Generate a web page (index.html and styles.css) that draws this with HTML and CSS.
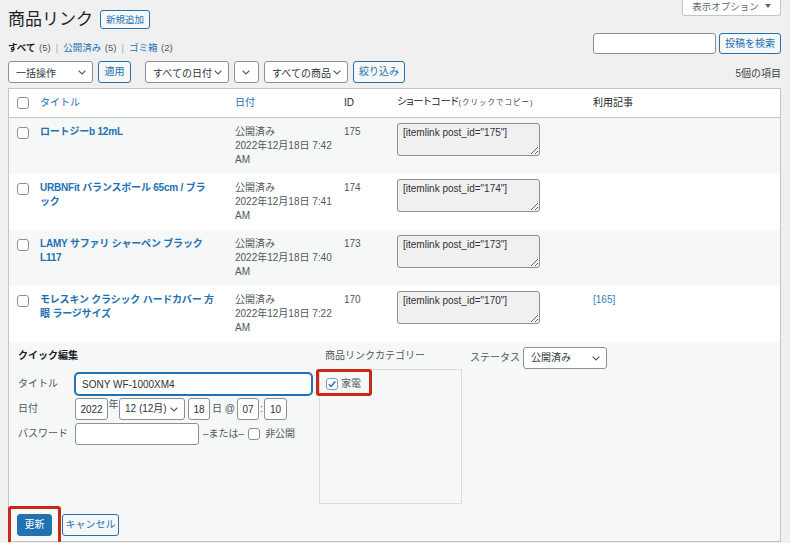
FILE: index.html
```html
<!DOCTYPE html>
<html lang="ja">
<head>
<meta charset="utf-8">
<title>商品リンク</title>
<link rel="stylesheet" href="styles.css">
</head>
<body>
<div class="wrap">
  <div class="top">
    <h1>商品リンク</h1>
    <a class="btn page-action">新規追加</a>
    <button class="screen-opts">表示オプション <svg width="6" height="4" viewBox="0 0 6 4"><path d="M0 0h6L3 4z" fill="#646970"/></svg></button>
  </div>

  <div class="bar">
    <div class="subsubsub"><b>すべて</b> <span class="count">(5)</span><span class="sep">|</span><a>公開済み</a> <span class="count">(5)</span><span class="sep">|</span><a>ゴミ箱</a> <span class="count">(2)</span></div>
    <div class="search">
      <input class="search-input" type="search">
      <button class="btn">投稿を検索</button>
    </div>
  </div>

  <div class="tablenav">
    <div class="select w85"><span>一括操作</span><svg class="chev" width="8" height="5" viewBox="0 0 8 5"><path d="M0.6 0.6L4 4 7.4 0.6" fill="none" stroke="#50575e" stroke-width="1.1"/></svg></div>
    <button class="btn w33">適用</button>
    <div class="select w84 gap-l"><span>すべての日付</span><svg class="chev" width="8" height="5" viewBox="0 0 8 5"><path d="M0.6 0.6L4 4 7.4 0.6" fill="none" stroke="#50575e" stroke-width="1.1"/></svg></div>
    <div class="select w25"><span></span><svg class="chev" width="8" height="5" viewBox="0 0 8 5"><path d="M0.6 0.6L4 4 7.4 0.6" fill="none" stroke="#50575e" stroke-width="1.1"/></svg></div>
    <div class="select w84"><span>すべての商品</span><svg class="chev" width="8" height="5" viewBox="0 0 8 5"><path d="M0.6 0.6L4 4 7.4 0.6" fill="none" stroke="#50575e" stroke-width="1.1"/></svg></div>
    <button class="btn w52">絞り込み</button>
    <span class="num">5個の項目</span>
  </div>

  <table class="list">
    <colgroup>
      <col class="c-cb"><col class="c-title"><col class="c-date"><col class="c-id"><col class="c-code"><col class="c-use">
    </colgroup>
    <thead>
      <tr>
        <th class="cb"><span class="chk"></span></th>
        <th><a class="sort">タイトル</a></th>
        <th><a class="sort">日付</a></th>
        <th>ID</th>
        <th><span class="palt">ショートコード</span><small>(クリックでコピー)</small></th>
        <th>利用記事</th>
      </tr>
    </thead>
    <tbody>
      <tr class="alt">
        <td class="cb"><span class="chk"></span></td>
        <td><a class="row-title">ロートジーb 12mL</a></td>
        <td>公開済み<br><span class="nw">2022年12月18日 7:42</span><br>AM</td>
        <td>175</td>
        <td class="code"><textarea readonly>[itemlink post_id="175"]</textarea></td>
        <td></td>
      </tr>
      <tr>
        <td class="cb"><span class="chk"></span></td>
        <td><a class="row-title">URBNFit バランスボール 65cm / ブラ<br>ック</a></td>
        <td>公開済み<br><span class="nw">2022年12月18日 7:41</span><br>AM</td>
        <td>174</td>
        <td class="code"><textarea readonly>[itemlink post_id="174"]</textarea></td>
        <td></td>
      </tr>
      <tr class="alt">
        <td class="cb"><span class="chk"></span></td>
        <td><a class="row-title">LAMY サファリ シャーペン ブラック<br>L117</a></td>
        <td>公開済み<br><span class="nw">2022年12月18日 7:40</span><br>AM</td>
        <td>173</td>
        <td class="code"><textarea readonly>[itemlink post_id="173"]</textarea></td>
        <td></td>
      </tr>
      <tr>
        <td class="cb"><span class="chk"></span></td>
        <td><a class="row-title">モレスキン クラシック ハードカバー 方<br>眼 ラージサイズ</a></td>
        <td>公開済み<br><span class="nw">2022年12月18日 7:22</span><br>AM</td>
        <td>170</td>
        <td class="code"><textarea readonly>[itemlink post_id="170"]</textarea></td>
        <td><a class="use">[165]</a></td>
      </tr>
      <tr class="qe-row">
        <td colspan="6">
          <div class="qe">
            <div class="qe-cols">
              <div class="qe-left">
                <div class="qe-head">クイック編集</div>
                <div class="qe-field first">
                  <span class="qe-label">タイトル</span>
                  <input class="in title-in" value="SONY WF-1000XM4">
                </div>
                <div class="qe-field">
                  <span class="qe-label">日付</span>
                  <input class="in w33 c" value="2022">
                  <span class="unit-year">年</span>
                  <div class="select w66"><span>12 (12月)</span><svg class="chev" width="8" height="5" viewBox="0 0 8 5"><path d="M0.6 0.6L4 4 7.4 0.6" fill="none" stroke="#50575e" stroke-width="1.1"/></svg></div>
                  <input class="in w22 c ml3" value="18">
                  <span class="unit">日 @</span>
                  <input class="in w22 c" value="07">
                  <span class="colon">:</span>
                  <input class="in w23 c" value="10">
                </div>
                <div class="qe-field">
                  <span class="qe-label">パスワード</span>
                  <input class="in w124" type="text">
                  <span class="or">–または–</span>
                  <span class="chk ml4"></span>
                  <span class="priv">非公開</span>
                </div>
              </div>
              <div class="qe-mid">
                <div class="qe-head2">商品リンクカテゴリー</div>
                <div class="cat-box">
                  <label class="cat"><span class="chk on"><svg width="10" height="10" viewBox="0 0 10 10"><path d="M1.8 5.2l2.2 2.3 4.3-5" fill="none" stroke="#2271b1" stroke-width="1.5"/></svg></span>家電</label>
                </div>
              </div>
              <div class="qe-right">
                <span class="qe-status">ステータス</span>
                <div class="select w84"><span>公開済み</span><svg class="chev" width="8" height="5" viewBox="0 0 8 5"><path d="M0.6 0.6L4 4 7.4 0.6" fill="none" stroke="#50575e" stroke-width="1.1"/></svg></div>
              </div>
            </div>
            <div class="qe-actions">
              <button class="btn primary">更新</button>
              <button class="btn cancel">キャンセル</button>
            </div>
          </div>
        </td>
      </tr>
    </tbody>
  </table>
</div>
</body>
</html>
```

FILE: styles.css
```css
html, body {
  margin: 0;
  padding: 0;
}
body {
  background: #f0f0f1;
  font-family: "Liberation Sans", "Noto Sans CJK JP", sans-serif;
  font-size: 10px;
  color: #3c434a;
}
a {
  color: #2271b1;
  text-decoration: none;
}
.wrap {
  padding-left: 8px;
  width: 773px;
}

/* header */
.top {
  display: flex;
  align-items: flex-start;
  height: 30px;
}
h1 {
  margin: 9px 0 0;
  font-size: 17px;
  line-height: 21px;
  font-weight: 400;
  color: #1d2327;
}
.btn {
  display: inline-flex;
  align-items: center;
  justify-content: center;
  box-sizing: border-box;
  height: 22px;
  padding: 0 6px;
  border: 1px solid #2271b1;
  border-radius: 3px;
  background: #f6f7f7;
  color: #2271b1;
  font-family: inherit;
  font-size: 10px;
  line-height: 1;
  cursor: pointer;
}
.page-action {
  height: 19px;
  width: 50px;
  padding: 0;
  margin: 10px 0 0 7px;
  font-size: 9.5px;
}
.screen-opts {
  margin-left: auto;
  width: 99px;
  height: 16px;
  box-sizing: border-box;
  border: 1px solid #c3c4c7;
  border-top: 0;
  border-radius: 0 0 3px 3px;
  background: #fff;
  color: #646970;
  font-family: inherit;
  font-size: 9.5px;
  display: flex;
  align-items: center;
  justify-content: center;
  gap: 6px;
  padding: 0 0 3px;
}

/* subsubsub + search */
.bar {
  display: flex;
  align-items: flex-end;
  margin-top: 3px;
  height: 21px;
}
.subsubsub {
  font-size: 9.5px;
  line-height: 14px;
  margin-bottom: -1px;
  color: #50575e;
}
.subsubsub b {
  color: #1d2327;
  font-weight: 700;
}
.subsubsub .count {
  margin-left: 1px;
}
.subsubsub .sep {
  color: #a7aaad;
  margin: 0 5px;
}
.search {
  margin-left: auto;
  display: flex;
  gap: 3px;
}
.search-input {
  width: 123px;
  height: 21px;
  box-sizing: border-box;
  border: 1px solid #8c8f94;
  border-radius: 3px;
  background: #fff;
  margin: 0;
}
.search .btn {
  width: 62px;
  height: 21px;
  padding: 0;
}

/* tablenav */
.tablenav {
  display: flex;
  align-items: center;
  gap: 5px;
  margin-top: 7px;
  height: 22px;
}
.select {
  display: flex;
  align-items: center;
  justify-content: space-between;
  box-sizing: border-box;
  height: 22px;
  padding: 0 6px 0 7px;
  border: 1px solid #8c8f94;
  border-radius: 3px;
  background: #fff;
  color: #2c3338;
  font-size: 10px;
  white-space: nowrap;
}
.chev {
  flex: none;
}
.w85 { width: 85px; }
.w84 { width: 84px; }
.w25 { width: 25px; padding: 0 8px 0 0; }
.w33 { width: 33px; padding: 0; }
.w52 { width: 52px; padding: 0; }
.gap-l { margin-left: 9px; }
.num {
  margin-left: auto;
  color: #3c434a;
}

/* list table */
.list {
  margin-top: 5px;
  width: 773px;
  border: 1px solid #c3c4c7;
  border-spacing: 0;
  table-layout: fixed;
  background: #fff;
}
.c-cb { width: 24px; }
.c-title { width: 195px; }
.c-date { width: 109px; }
.c-id { width: 53px; }
.c-code { width: 196px; }
.c-use { width: 194px; }
.list th {
  padding: 6px 7px 7px;
  line-height: 14px;
  border-bottom: 1px solid #c3c4c7;
  text-align: left;
  font-weight: 400;
  color: #1d2327;
  font-size: 10px;
  white-space: nowrap;
}
.list th .sort {
  color: #2271b1;
}
.list th small {
  font-size: 7.5px;
  letter-spacing: 1px;
  color: #3c434a;
}
.palt {
  font-feature-settings: "palt";
}
.list th.cb,
.list td.cb {
  padding-left: 8px;
  padding-right: 0;
}
.list td {
  padding: 7px;
  line-height: 14px;
  vertical-align: top;
  color: #50575e;
  font-size: 10px;
}
.nw {
  white-space: nowrap;
}
.list tr.alt td {
  background: #f6f7f7;
}
.list td.cb .chk {
  display: block;
  margin-top: 2px;
}
.chk {
  display: inline-block;
  box-sizing: border-box;
  width: 12px;
  height: 12px;
  border: 1px solid #8c8f94;
  border-radius: 3px;
  background: #fff;
  vertical-align: middle;
  flex: none;
}
.chk.on {
  display: inline-flex;
  align-items: center;
  justify-content: center;
  border-color: #7f9bb5;
}
.row-title {
  font-weight: 700;
  letter-spacing: -0.2px;
  white-space: nowrap;
}
.list td.code {
  padding-top: 5px;
}
.code textarea {
  display: block;
  width: 143px;
  height: 33px;
  box-sizing: border-box;
  margin: 0;
  border: 1px solid #8c8f94;
  border-radius: 3px;
  background: #f0f0f1;
  color: #2c3338;
  font-family: inherit;
  font-size: 10px;
  line-height: 13px;
  padding: 2px 5px;
  overflow: hidden;
}
.use {
  color: #3582c4;
}

/* quick edit */
.list tr.qe-row td {
  padding: 0;
  background: #f6f7f7;
}
.qe {
  padding: 5px 0 5px 8px;
}
.qe-cols {
  display: flex;
  align-items: flex-start;
}
.qe-left {
  width: 295px;
  padding-left: 1px;
}
.qe-head {
  font-weight: 700;
  color: #1d2327;
  line-height: 14px;
  padding-top: 2px;
}
.qe-field {
  display: flex;
  align-items: center;
  height: 22px;
  margin-top: 3px;
  color: #50575e;
}
.qe-field.first {
  margin-top: 10px;
}
.qe-label {
  width: 57px;
  flex: none;
  color: #50575e;
}
.in {
  box-sizing: border-box;
  height: 22px;
  margin: 0;
  border: 1px solid #8c8f94;
  border-radius: 3px;
  background: #fff;
  font-family: inherit;
  font-size: 10px;
  color: #2c3338;
  padding: 0 5px;
}
.in.c {
  text-align: center;
  padding: 0;
}
.title-in {
  width: 237px;
  border-color: #2271b1;
  box-shadow: 0 0 0 1px #2271b1;
  border-radius: 4px;
  padding: 0 6px;
}
.w22 { width: 22px; }
.w23 { width: 23px; }
.w124 { width: 124px; }
.w66 {
  width: 66px;
  padding: 0 6px 0 5px;
}
.ml3 { margin-left: 3px; }
.ml4 { margin-left: 4px; }
.unit-year {
  width: 11px;
  text-align: center;
  align-self: flex-start;
  line-height: 14px;
}
.unit {
  margin: 0 2px;
}
.colon {
  width: 5px;
  text-align: center;
}
.or {
  margin-left: 4px;
}
.priv {
  margin-left: 5px;
}
.qe-mid {
  margin-left: 6px;
  width: 143px;
}
.qe-head2 {
  color: #50575e;
  line-height: 14px;
  padding: 2px 0 0 6px;
}
.cat-box {
  margin-top: 6px;
  height: 135px;
  box-sizing: border-box;
  border: 1px solid #dcdcde;
  padding: 8px 0 0 6px;
}
.cat {
  position: relative;
  display: inline-flex;
  align-items: center;
  gap: 3px;
  color: #50575e;
  line-height: 12px;
}
.cat::after {
  content: "";
  position: absolute;
  left: -10px;
  top: -9px;
  width: 56px;
  height: 27px;
  box-sizing: border-box;
  border: 3px solid #cc2616;
  border-radius: 3px;
}
.qe-right {
  margin-left: 8px;
  display: flex;
  align-items: center;
  gap: 3px;
  color: #50575e;
}
.qe-actions {
  display: flex;
  gap: 10px;
  margin-top: 10px;
}
.primary {
  position: relative;
  width: 35px;
  padding: 0;
  background: #2271b1;
  color: #fff;
}
.primary::after {
  content: "";
  position: absolute;
  left: -10px;
  top: -9px;
  width: 53px;
  height: 39px;
  box-sizing: border-box;
  border: 3px solid #cc2616;
  border-radius: 3px;
}
.cancel {
  width: 57px;
  padding: 0;
}
```
